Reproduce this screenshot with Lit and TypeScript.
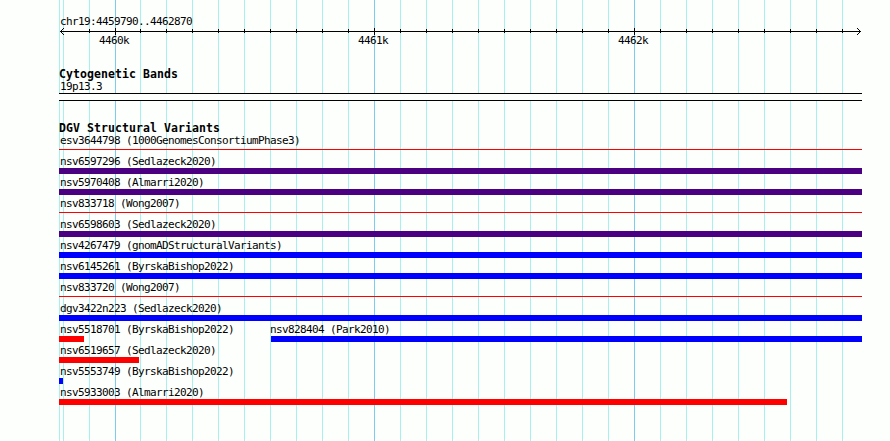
import { LitElement, html, svg, css } from "lit";
import { customElement, property } from "lit/decorators.js";
import { styleMap } from "lit/directives/style-map.js";

interface Variant {
  name: string;
  source: string;
  color: string;
  // offset and size inside the panel
  start: number;
  size: number;
  // offset of the label inside the panel
  labelStart: number;
  thin?: boolean;
}

const PANEL_WIDTH = 803;

const LOSS = "#ff0000";
const GAIN = "#0000ff";
const COMPLEX = "#4b0082";

const part = (
  name: string,
  source: string,
  color: string,
  start: number,
  size: number,
  labelStart: number = 1
): Variant => ({ name, source, color, start, size, labelStart });

const full = (
  name: string,
  source: string,
  color: string,
  thin = false
): Variant => ({ ...part(name, source, color, 0, PANEL_WIDTH), thin });

const ROWS: Variant[][] = [
  [full("esv3644798", "1000GenomesConsortiumPhase3", LOSS, true)],
  [full("nsv6597296", "Sedlazeck2020", COMPLEX)],
  [full("nsv5970408", "Almarri2020", COMPLEX)],
  [full("nsv833718", "Wong2007", LOSS, true)],
  [full("nsv6598603", "Sedlazeck2020", COMPLEX)],
  [full("nsv4267479", "gnomADStructuralVariants", GAIN)],
  [full("nsv6145261", "ByrskaBishop2022", GAIN)],
  [full("nsv833720", "Wong2007", LOSS, true)],
  [full("dgv3422n223", "Sedlazeck2020", GAIN)],
  [
    part("nsv5518701", "ByrskaBishop2022", LOSS, 0, 25),
    part("nsv828404", "Park2010", GAIN, 212, 591, 211),
  ],
  [part("nsv6519657", "Sedlazeck2020", LOSS, 0, 80)],
  [part("nsv5553749", "ByrskaBishop2022", GAIN, 0, 4)],
  [part("nsv5933003", "Almarri2020", LOSS, 0, 728)],
];

const MAJOR = [
  { x: 56, label: "4460k" },
  { x: 315, label: "4461k" },
  { x: 575, label: "4462k" },
];
const MINOR = [30, 81, 107, 133, 159, 185, 211, 237, 263, 289].concat(
  [...Array(9)].map((_, i) => 341 + i * 26),
  [...Array(8)].map((_, i) => 601 + i * 26)
);

@customElement("browser-grid")
export class BrowserGrid extends LitElement {
  static override styles = css`
    :host,
    svg {
      display: block;
      width: 803px;
      height: 441px;
    }

    .minor {
      fill: #a8f0ee;
    }

    .major {
      fill: #7cccf0;
    }
  `;

  override render() {
    return html`
      <svg viewBox="0 0 803 441" shape-rendering="crispEdges">
        ${[0, 4, ...MINOR].map(
          (x) =>
            svg`<rect class="minor" x=${x} y="0" width="1" height="441"></rect>`
        )}
        ${MAJOR.map(
          ({ x }) =>
            svg`<rect class="major" x=${x} y="0" width="1" height="441"></rect>`
        )}
      </svg>
    `;
  }
}

@customElement("browser-ruler")
export class BrowserRuler extends LitElement {
  static override styles = css`
    :host,
    svg {
      display: block;
    }

    text {
      font: 11px "DejaVu Sans Mono", monospace;
      letter-spacing: -0.622px;
    }
  `;

  override render() {
    return html`
      <svg
        width="803"
        height="20"
        viewBox="0 0 803 20"
        shape-rendering="crispEdges"
      >
        <rect x="1" y="4" width="801" height="1"></rect>
        ${[1, 2, 3].map(
          (i) => svg`
            <rect x=${1 + i} y=${4 - i} width="1" height="1"></rect>
            <rect x=${1 + i} y=${4 + i} width="1" height="1"></rect>
            <rect x=${801 - i} y=${4 - i} width="1" height="1"></rect>
            <rect x=${801 - i} y=${4 + i} width="1" height="1"></rect>
          `
        )}
        ${MINOR.map(
          (x) => svg`<rect x=${x} y="2" width="1" height="4"></rect>`
        )}
        ${MAJOR.map(
          ({ x, label }) => svg`
            <rect x=${x} y="1" width="1" height="7"></rect>
            <text x=${x - 16} y="17">${label}</text>
          `
        )}
      </svg>
    `;
  }
}

@customElement("variant-row")
export class VariantRow extends LitElement {
  static override styles = css`
    :host {
      display: grid;
      height: 21px;
    }

    .variant {
      grid-area: 1 / 1;
    }

    .label {
      height: 15px;
      line-height: 17px;
      padding-left: var(--label-start);
      white-space: pre;
    }

    .bar {
      width: var(--size);
      height: 6px;
      margin-left: var(--start);
      background-color: var(--color);
    }

    .bar.thin {
      height: 1px;
      margin-top: 2px;
    }
  `;

  @property({ attribute: false })
  variants: Variant[] = [];

  override render() {
    return this.variants.map(
      (v) => html`
        <div
          class="variant"
          style=${styleMap({
            "--start": `${v.start}px`,
            "--size": `${v.size}px`,
            "--label-start": `${v.labelStart}px`,
            "--color": v.color,
          })}
        >
          <div class="label">${v.name} (${v.source})</div>
          <div class="bar ${v.thin ? "thin" : ""}"></div>
        </div>
      `
    );
  }
}

@customElement("app-root")
export class AppRoot extends LitElement {
  static override styles = css`
    :host {
      display: grid;
      grid-template-columns: 803px;
      box-sizing: border-box;
      width: 890px;
      height: 441px;
      padding-left: 59px;
      overflow: hidden;
      background-color: #fdfffc;
      color: #000;
      font: 11px "DejaVu Sans Mono", monospace;
      letter-spacing: -0.622px;
    }

    browser-grid,
    .tracks {
      grid-area: 1 / 1;
    }

    .tracks {
      display: flex;
      flex-direction: column;
    }

    .region {
      height: 12px;
      line-height: 14px;
      padding: 15px 0 0 1px;
    }

    .title {
      height: 12px;
      line-height: 12px;
      font-size: 11.5px;
      font-weight: bold;
      letter-spacing: 0.077px;
    }

    .cytoband {
      margin-top: 21px;
    }

    .band-name {
      height: 13px;
      line-height: 13px;
      padding-left: 1px;
    }

    .band {
      box-sizing: border-box;
      height: 8px;
      border: solid #000;
      border-width: 1px 0;
      background-color: #fdfffc;
    }

    .variants {
      margin-top: 21px;
    }

    .variants .title {
      height: 10px;
    }
  `;

  override render() {
    return html`
      <browser-grid></browser-grid>
      <div class="tracks">
        <div class="region">chr19:4459790..4462870</div>
        <browser-ruler></browser-ruler>
        <section class="cytoband">
          <div class="title">Cytogenetic Bands</div>
          <div class="band-name">19p13.3</div>
          <div class="band"></div>
        </section>
        <section class="variants">
          <div class="title">DGV Structural Variants</div>
          ${ROWS.map(
            (row) => html`<variant-row .variants=${row}></variant-row>`
          )}
        </section>
      </div>
    `;
  }
}
